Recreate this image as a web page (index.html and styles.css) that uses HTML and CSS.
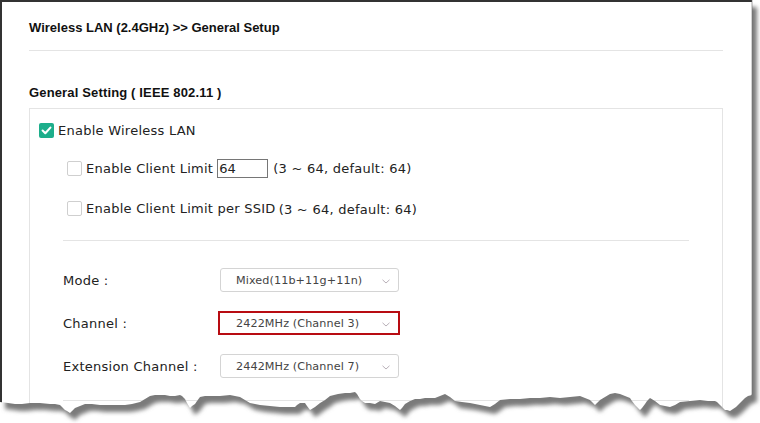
FILE: index.html
```html
<!DOCTYPE html>
<html lang="en">
<head>
  <meta charset="UTF-8">
  <title>Wireless LAN General Setup</title>
  <link rel="stylesheet" href="styles.css">
</head>

<body>

  <div class="page">
    <!-- Page header -->
    <div class="page-header">Wireless LAN (2.4GHz) &gt;&gt; General Setup</div>

    <div class="section-title">General Setting ( IEEE 802.11 )</div>

    <div class="setting-box">
      <div class="check-row">
        <span class="check checked">
          <svg width="15" height="15" viewBox="0 0 15 15"><path d="M3.6 7.6 L6.3 10.2 L11.4 4.6" fill="none" stroke="#fff" stroke-width="2.1" stroke-linecap="round" stroke-linejoin="round"/></svg>
        </span>
        <span>Enable Wireless LAN</span>
      </div>

      <div class="check-row sub client-limit">
        <span class="check"></span>
        <span>Enable Client Limit</span>
        <input class="num-input" type="text" value="64">
        <span>(3 ~ 64, default: 64)</span>
      </div>

      <div class="check-row sub client-ssid">
        <span class="check"></span>
        <span>Enable Client Limit per SSID</span>
        <span class="hint">(3 ~ 64, default: 64)</span>
      </div>

      <div class="divider"></div>

      <div class="form-row mode-row">
        <span class="form-label">Mode :</span>
        <div class="select">
          <span>Mixed(11b+11g+11n)</span>
          <svg class="chevron" width="8" height="5" viewBox="0 0 8 5"><path d="M0.5 0.8 L4 4 L7.5 0.8" fill="none" stroke="#b9b0b8" stroke-width="1"/></svg>
        </div>
      </div>

      <div class="form-row">
        <span class="form-label">Channel :</span>
        <div class="select highlight">
          <span>2422MHz (Channel 3)</span>
          <svg class="chevron" width="8" height="5" viewBox="0 0 8 5"><path d="M0.5 0.8 L4 4 L7.5 0.8" fill="none" stroke="#b9b0b8" stroke-width="1"/></svg>
        </div>
      </div>

      <div class="form-row">
        <span class="form-label">Extension Channel :</span>
        <div class="select">
          <span>2442MHz (Channel 7)</span>
          <svg class="chevron" width="8" height="5" viewBox="0 0 8 5"><path d="M0.5 0.8 L4 4 L7.5 0.8" fill="none" stroke="#b9b0b8" stroke-width="1"/></svg>
        </div>
      </div>

      <div class="divider bottom"></div>
    </div>
  </div>

  <!-- torn paper edge + drop shadow, drawn over the page -->
  <svg class="torn-edge" width="760" height="423" viewBox="0 0 760 423">
    <defs>
      <path id="sheet" d="M0,0 H752 V395 L748,396 L745,398 L742,401 L740,403 L736,407 L730,411 L727,410 L725,410 L722,407 L720,405 L717,402 L715,401 L708,401 L700,400 L690,401 L680,402 L675,405 L670,407 L665,406 L660,405 L655,401 L650,398 L647,401 L645,404 L642,408 L640,410 L637,407 L635,405 L632,401 L630,398 L625,396 L620,394 L615,393 L610,394 L605,397 L600,400 L597,403 L595,405 L592,402 L590,400 L585,398 L580,396 L570,397 L560,398 L550,397 L540,398 L530,398 L520,399 L510,399 L500,400 L495,404 L490,407 L480,405 L470,403 L462,402 L455,401 L450,397 L445,394 L440,396 L435,398 L425,398 L420,399 L415,399 L410,401 L405,404 L402,408 L400,410 L395,406 L390,403 L385,402 L380,401 L375,404 L370,403 L365,403 L362,401 L360,399 L357,394 L355,392 L350,393 L345,393 L338,394 L330,396 L325,400 L320,403 L315,407 L310,410 L307,406 L305,403 L300,403 L297,405 L295,407 L288,407 L280,407 L270,406 L260,405 L255,404 L250,403 L245,400 L240,397 L235,396 L230,395 L220,396 L210,396 L205,396 L200,397 L197,401 L195,404 L192,406 L190,408 L187,403 L185,399 L182,396 L180,395 L175,396 L170,396 L165,395 L160,395 L155,395 L150,396 L145,399 L140,402 L132,404 L125,405 L112,405 L100,405 L92,404 L85,404 L80,406 L75,408 L72,411 L70,413 L67,411 L65,410 L62,407 L60,405 L55,404 L50,404 L40,403 L30,403 L22,404 L15,404 L8,403 L0,402 Z"/>
      <clipPath id="outside">
        <path clip-rule="evenodd" d="M0,0 H760 V423 H0 Z M0,0 H752 V395 L748,396 L745,398 L742,401 L740,403 L736,407 L730,411 L727,410 L725,410 L722,407 L720,405 L717,402 L715,401 L708,401 L700,400 L690,401 L680,402 L675,405 L670,407 L665,406 L660,405 L655,401 L650,398 L647,401 L645,404 L642,408 L640,410 L637,407 L635,405 L632,401 L630,398 L625,396 L620,394 L615,393 L610,394 L605,397 L600,400 L597,403 L595,405 L592,402 L590,400 L585,398 L580,396 L570,397 L560,398 L550,397 L540,398 L530,398 L520,399 L510,399 L500,400 L495,404 L490,407 L480,405 L470,403 L462,402 L455,401 L450,397 L445,394 L440,396 L435,398 L425,398 L420,399 L415,399 L410,401 L405,404 L402,408 L400,410 L395,406 L390,403 L385,402 L380,401 L375,404 L370,403 L365,403 L362,401 L360,399 L357,394 L355,392 L350,393 L345,393 L338,394 L330,396 L325,400 L320,403 L315,407 L310,410 L307,406 L305,403 L300,403 L297,405 L295,407 L288,407 L280,407 L270,406 L260,405 L255,404 L250,403 L245,400 L240,397 L235,396 L230,395 L220,396 L210,396 L205,396 L200,397 L197,401 L195,404 L192,406 L190,408 L187,403 L185,399 L182,396 L180,395 L175,396 L170,396 L165,395 L160,395 L155,395 L150,396 L145,399 L140,402 L132,404 L125,405 L112,405 L100,405 L92,404 L85,404 L80,406 L75,408 L72,411 L70,413 L67,411 L65,410 L62,407 L60,405 L55,404 L50,404 L40,403 L30,403 L22,404 L15,404 L8,403 L0,402 Z"/>
      </clipPath>
      <filter id="soft" x="-5%" y="-5%" width="110%" height="110%">
        <feGaussianBlur stdDeviation="2"/>
      </filter>
    </defs>
    <g clip-path="url(#outside)">
      <rect width="760" height="423" fill="#fff"/>
      <use href="#sheet" transform="translate(5 7)" fill="#7a7a7a" filter="url(#soft)"/>
    </g>
    <use href="#sheet" fill="none" stroke="#6a6a6a" stroke-width="0.6" stroke-dasharray="0 752 396 10000"/>
  </svg>

</body>
</html>
```

FILE: styles.css
```css
html, body {
  margin: 0;
  padding: 0;
  width: 760px;
  height: 423px;
  overflow: hidden;
  background-color: #fff;
  font-family: 'DejaVu Sans', Verdana, sans-serif;
  font-size: 13px;
  letter-spacing: 0.25px;
  color: #222;
}

body {
  position: relative;
}

.page {
  width: 694px;
  height: 421px;
  padding: 0 29px 0 27px;
  border-top: 2px solid #333;
  border-left: 2px solid #333;
  background-color: #fff;
  overflow: hidden;
}

.page-header {
  font-family: 'Liberation Sans', Arial, sans-serif;
  font-weight: 700;
  font-size: 13px;
  line-height: 16px;
  letter-spacing: 0;
  padding: 18px 0 14px;
  border-bottom: 1px solid #e4e4e4;
  color: #111;
}

.section-title {
  font-family: 'Liberation Sans', Arial, sans-serif;
  font-weight: 700;
  font-size: 13px;
  line-height: 16px;
  letter-spacing: 0.15px;
  margin: 34px 0 7px;
  color: #111;
}

.setting-box {
  border: 1px solid #e4e4e4;
  height: 400px;
  padding: 11px 0 0 9px;
}

.check-row {
  display: flex;
  align-items: center;
  height: 20px;
  gap: 4px;
}

.check-row.sub {
  margin-left: 28px;
}

.client-limit {
  margin-top: 18px;
}

.client-ssid {
  margin-top: 20px;
}

.check {
  width: 13px;
  height: 13px;
  border: 1px solid #cfcfcf;
  border-radius: 2px;
  background-color: #fff;
  flex-shrink: 0;
}

.check.checked {
  width: 15px;
  height: 15px;
  border: none;
  background-color: #1dae8b;
  display: flex;
}

.num-input {
  width: 47px;
  height: 17px;
  padding: 0 1px;
  margin: 1px 1px 0 0;
  border: 1px solid #767676;
  font-family: 'DejaVu Sans', Verdana, sans-serif;
  font-size: 13px;
  color: #222;
  box-sizing: content-box;
}

.hint {
  margin-left: -1px;
  padding-top: 2px;
}

.divider {
  height: 1px;
  background-color: #e4e4e4;
  width: 626px;
  margin: 22px 0 0 24px;
}

.divider.bottom {
  margin-top: 22px;
}

.form-row {
  display: flex;
  align-items: center;
  margin: 19px 0 0 24px;
  height: 24px;
}

.mode-row {
  margin-top: 27px;
}

.form-label {
  width: 157px;
  color: #222;
}

.select {
  width: 154px;
  height: 22px;
  border: 1px solid #d4d4d4;
  border-radius: 3px;
  padding: 0 8px 0 15px;
  display: flex;
  align-items: center;
  justify-content: space-between;
  font-size: 11.2px;
  letter-spacing: 0.1px;
  color: #444;
}

.select.highlight {
  border: 2px solid #b80c12;
  border-radius: 0;
  margin-left: -2px;
  height: 20px;
  width: 154px;
  padding-left: 16px;
}

.chevron {
  margin-top: 2px;
}

.torn-edge {
  position: absolute;
  top: 0;
  left: 0;
  pointer-events: none;
}
```
